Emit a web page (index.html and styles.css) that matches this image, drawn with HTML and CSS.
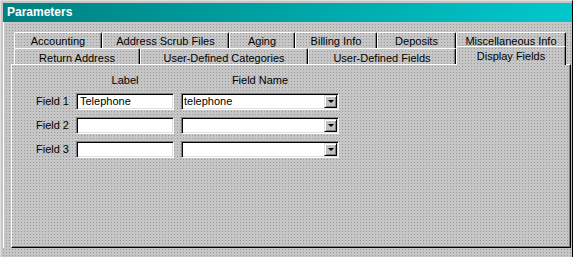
FILE: index.html
```html
<!DOCTYPE html>
<html lang="en">
<head>
    <meta charset="UTF-8">
    <title>Parameters</title>
    <link rel="stylesheet" href="styles.css">
</head>
<body>
    <div class="window">
        <div class="titlebar">Parameters</div>
        <div class="content">
            <div class="tabs">
                <div class="tab-row row-1">
                    <div class="tab">Accounting</div>
                    <div class="tab">Address Scrub Files</div>
                    <div class="tab">Aging</div>
                    <div class="tab">Billing Info</div>
                    <div class="tab">Deposits</div>
                    <div class="tab">Miscellaneous Info</div>
                </div>
                <div class="tab-row row-2">
                    <div class="tab">Return Address</div>
                    <div class="tab">User-Defined Categories</div>
                    <div class="tab">User-Defined Fields</div>
                    <div class="tab active">Display Fields</div>
                </div>
            </div>
            <div class="panel">
                <div class="fields">
                    <div></div>
                    <div class="col-head">Label</div>
                    <div class="col-head">Field Name</div>

                    <div class="field-label">Field 1</div>
                    <div class="textbox">Telephone</div>
                    <div class="combo"><span class="combo-text">telephone</span><span class="combo-btn"></span></div>

                    <div class="field-label">Field 2</div>
                    <div class="textbox"></div>
                    <div class="combo"><span class="combo-text"></span><span class="combo-btn"></span></div>

                    <div class="field-label">Field 3</div>
                    <div class="textbox"></div>
                    <div class="combo"><span class="combo-text"></span><span class="combo-btn"></span></div>
                </div>
            </div>
        </div>
    </div>
</body>
</html>
```

FILE: styles.css
```css
body {
    margin: 0;
    font-family: "Liberation Sans", Arial, sans-serif;
    font-size: 11px;
    color: #000;
    background-color: #c6c6c6;
    background-image: conic-gradient(at 1px 1px, transparent 75%, #979797 0);
    background-size: 3px 3px;
    background-attachment: fixed;
}

.window {
    box-sizing: border-box;
    width: 573px;
    height: 257px;
    border-left: 1px solid #dfdfdf;
    border-top: 1px solid #dfdfdf;
    border-right: 1px solid #000;
    padding: 2px 0 0 2px;
}

.titlebar {
    height: 19px;
    line-height: 19px;
    padding-left: 4px;
    font-size: 12px;
    font-weight: bold;
    color: #fff;
    background: linear-gradient(90deg, #008080, #00c8cc);
}

.content {
    border-left: 1px solid #fff;
    padding-top: 10px;
}

.tabs {
    margin-left: 10px;
    width: 552px;
}

.tab-row {
    display: flex;
    height: 16px;
}

.tab {
    box-sizing: border-box;
    height: 16px;
    padding-top: 2px;
    line-height: 13px;
    text-align: center;
    white-space: nowrap;
    border-top: 1px solid #fff;
    border-left: 1px solid #fff;
    border-right: 1px solid #000;
    border-top-left-radius: 2px;
    border-top-right-radius: 2px;
    box-shadow: inset -1px 0 #808080;
}

.row-2 .tab {
    padding-top: 3px;
}

.row-1 .tab:nth-child(1) { width: 88px; }
.row-1 .tab:nth-child(2) { width: 127px; }
.row-1 .tab:nth-child(3) { width: 66px; }
.row-1 .tab:nth-child(4) { width: 82px; }
.row-1 .tab:nth-child(5) { width: 79px; }
.row-1 .tab:nth-child(6) { width: 110px; }

.row-2 .tab:nth-child(1) { width: 126px; }
.row-2 .tab:nth-child(2) { width: 168px; }
.row-2 .tab:nth-child(3) { width: 148px; }
.row-2 .tab:nth-child(4) { width: 110px; }

.tab.active {
    position: relative;
    z-index: 1;
    height: 19px;
    margin-top: -2px;
    margin-bottom: -1px;
    padding-top: 3px;
    background-color: #c6c6c6;
    background-image: conic-gradient(at 1px 1px, transparent 75%, #979797 0);
    background-size: 3px 3px;
    background-attachment: fixed;
}

.panel {
    box-sizing: border-box;
    margin-left: 7px;
    width: 560px;
    height: 184px;
    border-top: 1px solid #fff;
    border-left: 1px solid #fff;
    border-right: 1px solid #000;
    border-bottom: 1px solid #000;
    box-shadow: inset -1px -1px #808080;
    padding: 10px 0 0 7px;
}

.fields {
    display: grid;
    grid-template-columns: 50px 98px 158px;
    grid-template-rows: 11px 17px 17px 17px;
    column-gap: 7px;
    row-gap: 7px;
}

.col-head {
    line-height: 11px;
    text-align: center;
}

.field-label {
    line-height: 17px;
    text-align: right;
    white-space: nowrap;
}

.textbox,
.combo {
    box-sizing: border-box;
    height: 17px;
    background: #fff;
    border: 1px solid;
    border-color: #808080 #fff #fff #808080;
    box-shadow: inset 1px 1px #000, inset -1px -1px #dfdfdf;
}

.textbox {
    padding: 1px 0 0 3px;
    line-height: 13px;
}

.combo {
    display: flex;
    align-items: stretch;
    padding: 1px 1px 1px 2px;
}

.combo-text {
    flex: 1;
    line-height: 13px;
}

.combo-btn {
    box-sizing: border-box;
    width: 13px;
    background: #c0c0c0;
    border: 1px solid;
    border-color: #dfdfdf #000 #000 #dfdfdf;
    box-shadow: inset 1px 1px #fff, inset -1px -1px #808080;
    display: flex;
    justify-content: center;
    align-items: center;
}

.combo-btn::after {
    content: "";
    border-left: 3px solid transparent;
    border-right: 3px solid transparent;
    border-top: 3px solid #000;
}
```
